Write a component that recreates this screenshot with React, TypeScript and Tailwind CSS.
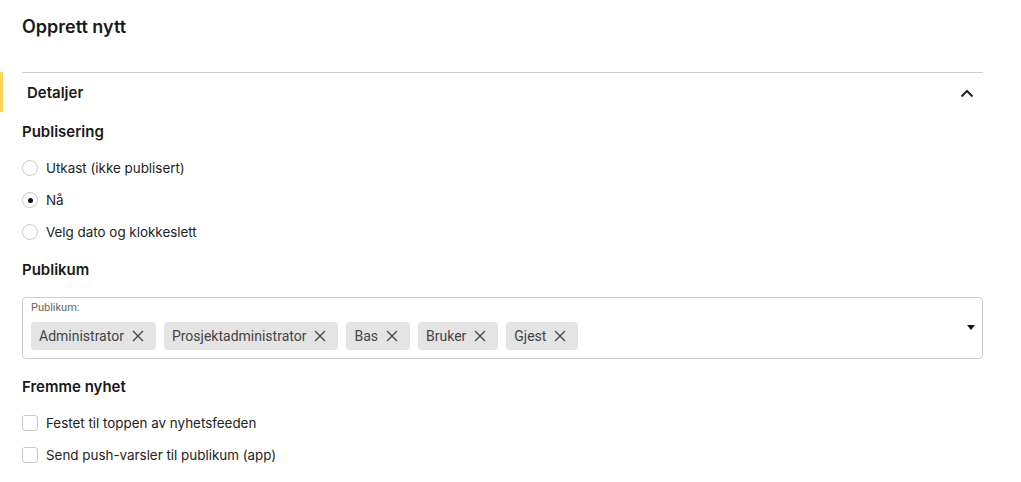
import React from "react";

const Radio = ({ checked, label }: { checked?: boolean; label: string }) => (
  <div className="flex items-center h-8">
    <span className="w-4 h-4 rounded-full border border-[#c8c8c8] flex items-center justify-center bg-white">
      {checked && <span className="w-[5px] h-[5px] rounded-full bg-[#111]" />}
    </span>
    <span className="ml-2 text-[13.4px] text-[#222]">{label}</span>
  </div>
);

const Check = ({ label }: { label: string }) => (
  <div className="flex items-center h-8">
    <span className="w-4 h-4 rounded-[3px] border border-[#c8c8c8] bg-white" />
    <span className="ml-2 text-[13.4px] text-[#222]">{label}</span>
  </div>
);

const Chip = ({ label }: { label: string }) => (
  <span className="flex items-center h-7 rounded-[4px] bg-[#e4e4e4] pl-2 pr-[12px] text-[14px] text-[#444] [font-family:Roboto,sans-serif]">
    {label}
    <svg width="12" height="12" viewBox="0 0 12 12" className="ml-[8px]" fill="none" stroke="#444" strokeWidth="1.3">
      <path d="M1 1L11 11M11 1L1 11" />
    </svg>
  </span>
);

export default function App() {
  return (
    <div className="w-[1021px] h-[482px] bg-white [font-family:Inter,sans-serif] text-[#1a1a1a] overflow-hidden">
      <div className="pl-[22px] pr-[38px]">
        <h1 className="text-[18px] font-semibold pt-[15px] h-[72px] leading-[24px]">Opprett nytt</h1>
      </div>
      <div className="relative">
        <div className="absolute left-0 top-0 w-[3px] h-10 bg-[#fdd85d]" />
        <div className="ml-[22px] mr-[38px] border-t border-[#cfcfcf] h-10 flex items-center justify-between pl-[5px] pr-[9px] pt-[2px]">
          <span className="text-[15px] font-semibold">Detaljer</span>
          <svg width="14" height="9" viewBox="0 0 14 9" fill="none" stroke="#222" strokeWidth="2">
            <path d="M1.5 7.5L7 2L12.5 7.5" />
          </svg>
        </div>
      </div>
      <div className="pl-[22px] pr-[38px]">
        <div className="text-[15px] font-semibold h-[40px] flex items-center pt-[1px]">Publisering</div>
        <div className="flex flex-col">
          <Radio label="Utkast (ikke publisert)" />
          <Radio checked label="Nå" />
          <Radio label="Velg dato og klokkeslett" />
        </div>
        <div className="text-[15px] font-semibold h-[42px] flex items-center mt-[1px]">Publikum</div>
        <div className="mt-[6px] h-[62px] border border-[#cfcfcf] rounded-[4px] flex items-start justify-between pl-2 pr-[7px]">
          <div className="flex flex-col">
            <span className="text-[11px] text-[#666] [font-family:Roboto,sans-serif] leading-[13px] mt-[3px]">Publikum:</span>
            <div className="flex gap-2 mt-[8px]">
              <Chip label="Administrator" />
              <Chip label="Prosjektadministrator" />
              <Chip label="Bas" />
              <Chip label="Bruker" />
              <Chip label="Gjest" />
            </div>
          </div>
          <svg width="8" height="5" viewBox="0 0 8 5" className="mt-[27px]">
            <path d="M0 0H8L4 5Z" fill="#111" />
          </svg>
        </div>
        <div className="text-[15px] font-semibold h-6 mt-4 flex items-center">Fremme nyhet</div>
        <div className="flex flex-col mt-2">
          <Check label="Festet til toppen av nyhetsfeeden" />
          <Check label="Send push-varsler til publikum (app)" />
        </div>
      </div>
    </div>
  );
}
